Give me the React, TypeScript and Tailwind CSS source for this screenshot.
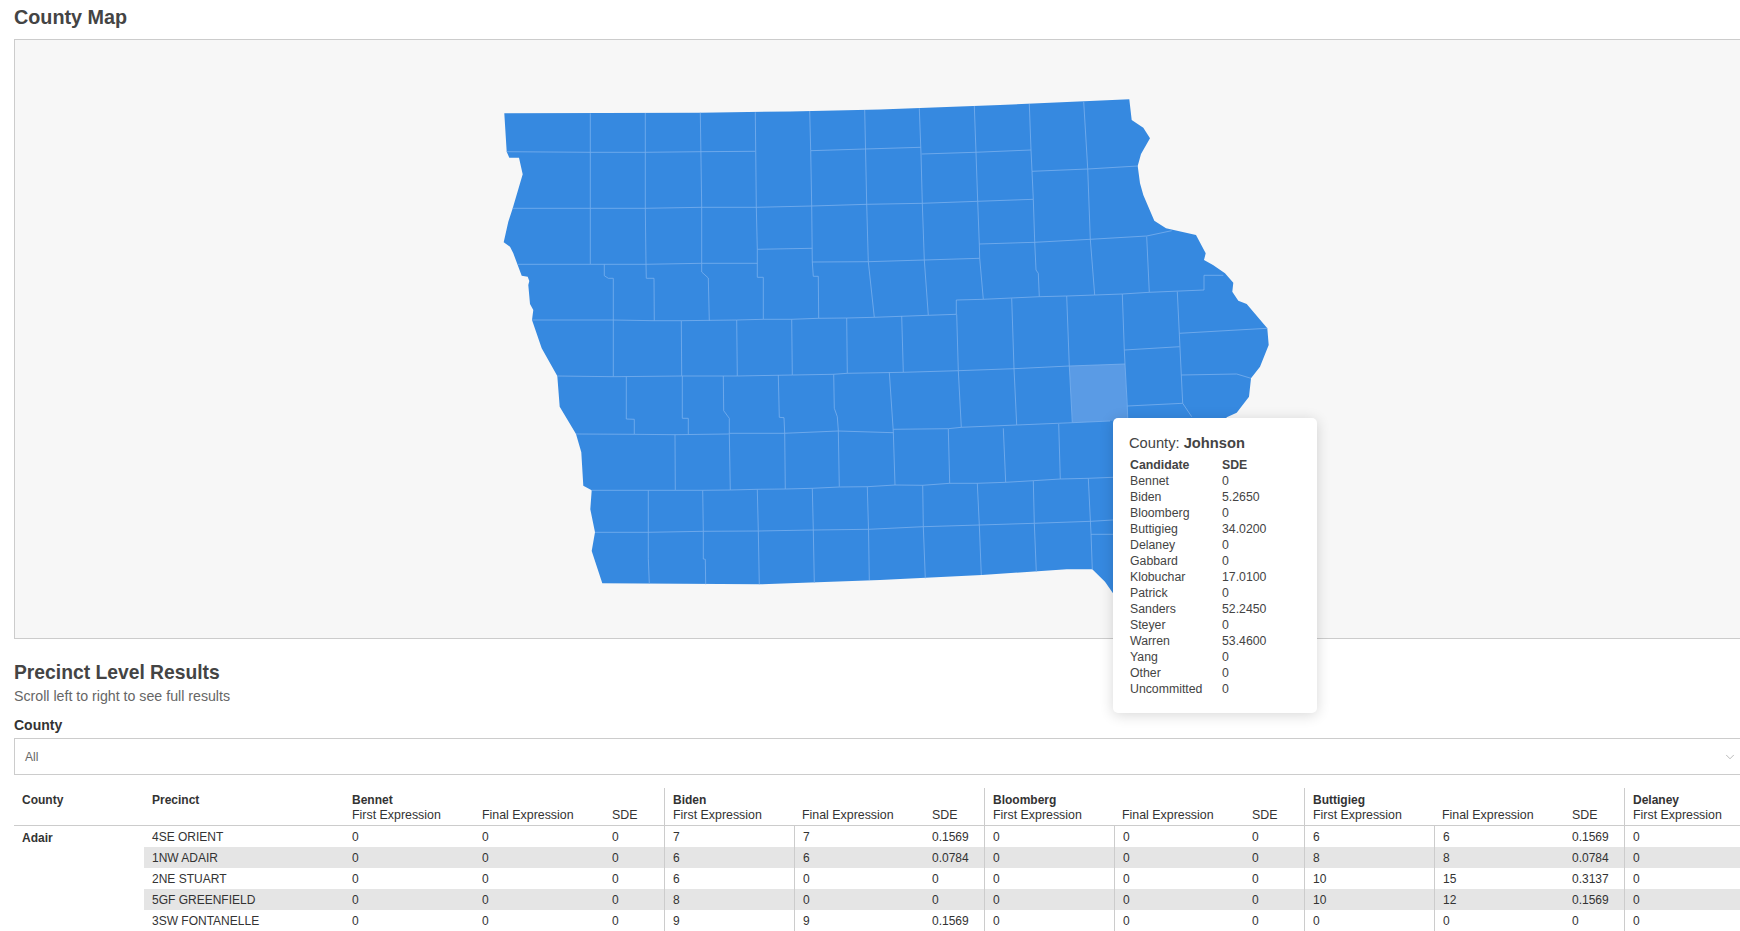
import { ChevronDown } from "lucide-react";

const outline =
  "M504.3 113.3 L700 112.7 L790 111.5 L880 109.5 L1000 105 L1129.3 99.3 L1131.7 120 L1143.3 127.7 L1150 138.3 L1141 154 L1137.7 166 L1140 183.3 L1143.3 195 L1154.3 220.7 L1166 228.3 L1196 235 L1205.7 253.3 L1204 260 L1213 265 L1225 273.3 L1233.3 282.7 L1232.3 291.7 L1238.3 300.7 L1246.7 304 L1267.3 328.3 L1268.7 345 L1260 366.7 L1251 378.3 L1249 396.7 L1236.7 412.7 L1226.7 417.3 L1200 480 L1150 560 L1113 593.3 L1105 581.7 L1092.3 569.3 L1066.7 569.3 L981.7 575 L880 580 L760 584.3 L602.3 583.3 L591.7 551 L595 532.3 L590.3 509.3 L591.7 490.3 L583.3 485.7 L581.3 452.3 L576 434 L559.7 406.7 L557.3 376 L541.7 348.3 L532 320 L533.3 310 L530 304 L528.3 285 L529.3 281 L527.7 276.7 L521.7 275.7 L513.3 253.3 L510 246.7 L503.7 242.3 L508.3 221.7 L512.7 208.3 L522.7 174.3 L519 157.7 L509.3 157.7 L506.7 151.7 Z";

// county borders, in page coordinates
const countyLines = [
  // vertical, north to south
  "590.3,113.3 590.3,264.3",
  "645.3,113 645.3,208 646,264.3 646.3,278.3 654,278.3 654.3,320.7",
  "700.3,112.7 701.7,207 701.7,263.3 701.7,272 708.3,278 709.3,320.7",
  "755.3,112.3 756.3,207 757.3,249.3 757.3,277.3 763.3,277.3 763.3,319.3",
  "809.7,111 810.7,150.7 811.7,206 812.3,262 813.3,276.3 818.3,276.3 818.7,318.3",
  "864.7,110 866.7,204 868.3,261.7 874.3,317.3",
  "919.3,108.3 921,154 922.3,203.3 924.3,260 928.3,315.3",
  "974.3,106 976,152.7 977.7,201.3 979.3,244 979.7,258.3 983.3,299.3",
  "1029.3,104 1031,150 1032,171.3 1033.3,199.3 1034.7,241.7 1036,270 1038.3,273.3 1039.3,296.7",
  "1083.7,101.7 1087.7,168.3 1090.3,239.3 1094.7,295",
  "1146.7,236.7 1149.3,292.3",
  "604.3,264.3 604.3,275.7 608.3,278.3 613.3,278.3 613.3,376.7",
  "681.3,320.7 681.7,376",
  "736.7,320 737.3,376",
  "791.7,319.3 792.3,375",
  "846.7,318 847.3,373.3",
  "901.7,316 903.3,372.3",
  "956.3,314.3 956.3,300",
  "956.7,314.3 958.3,370.7 961.3,427.3",
  "1011.7,298.3 1014,368.7 1016.7,425",
  "1066.7,296 1069.3,366 1072.3,422.7",
  "1122.3,294 1124.3,350 1125,364 1127.3,406 1127.7,418",
  "1177.3,291.7 1179.3,333.3 1181.3,375 1182.7,403.3 1191.7,416.7",
  "626.3,376.7 626.3,419 634.3,419.3 634.3,434.3",
  "682.3,376 682.3,418.3 688.3,418.3 688.3,434.3",
  "723.3,376 723.7,410.7 729.3,418.3 729.3,433.3 730.3,490",
  "778.3,375 779.3,417.3 784,417.7 784.7,433.3 785.3,489",
  "833.7,374.3 834.3,408.3 837.3,416.7 838.3,430 839.3,486.7",
  "889.3,372.3 893.3,431.7 895,485",
  "948.3,429 949.7,483.3",
  "1003.3,428.3 1005.7,482.3",
  "1058.7,424 1060.3,479",
  "675,434.7 675.3,490.3",
  "648.3,490.3 648.3,558.3 649.3,583.3",
  "702.7,490.3 703.3,531.3 703.3,559 705.3,559.3 705.7,584.3",
  "757.3,489.3 758.3,530.7 759.3,584.3",
  "812.3,488.3 813.3,530 814.3,582.7",
  "867.3,486.7 868.5,529.3 869.3,580",
  "922.7,485.3 923.3,526.7 925.3,578.3",
  "977.3,483.3 979.3,525 981.3,575",
  "1033.3,480.7 1034.3,523.3 1036.3,571.7",
  "1088.3,478.3 1091,533.3 1092.3,569.3",
  // horizontal, west to east
  "506.7,151.7 590.3,152.3 645.3,152.3 700,151.7 755.3,151.3",
  "810.7,150.7 864.7,149 920.7,147.3",
  "921.7,154 975,152.3 1031,150",
  "1032,171.3 1087.7,169 1137.7,166",
  "512.7,208.3 590.3,208.3 645.3,208.3 701.7,207.3 756.3,207.3 811.7,206 867.3,204.3 922.3,203.3 977.7,201.3 1033.3,199.3",
  "757.3,249.3 812.3,248.3",
  "517.7,264.3 590.3,264.3 646,264.3 701.7,263.3 757.3,263.3",
  "812.3,262 868.3,261.7 924.3,260 979.7,258.3",
  "979.3,244 1034.7,242.3 1090.3,239.3 1146.7,236 1171.7,230.7",
  "532,320 613.3,320 654,320.7 681.3,320.7 736.7,320 763.3,319.3 791.7,319.3 818.3,318.3 846.7,318 874.3,317.3 928.3,315.3 956.3,314.3",
  "956.3,300 983.3,299.3 1039.3,296.7 1066.7,296 1094.7,295 1122.3,294 1149.3,292.3 1204,290 1204,275.3 1223.3,275.3",
  "1179.3,333.3 1267.3,328.3",
  "1181.3,375 1236.7,374 1251,378.3",
  "1124.3,350 1179.7,346.7",
  "1127.3,406 1182.7,403.3",
  "557.3,376 613.3,376.7 681.7,376 737.3,376 792.3,375 833.3,374.3 847.3,373.3 903.3,372.3 958.3,370.7 1014,368.7 1069.3,366 1125,364",
  "576,434 634.3,434.3 675,434.7 728.3,434 729.3,433.3 784,433.3 838.3,431 893.3,432.7",
  "893.3,429.3 948.3,428.7 961.3,427.3 1016.7,425 1072.3,422.7 1110,421",
  "591.7,490.3 675.3,490.3 702.7,490.3 730.3,490 757.3,489.3 785.3,489 812.3,488.3 839.3,487 867.3,486.7 895,485 922.7,485.3 949.7,483.3 977.3,483.3 1005.7,482.3 1033.3,480.7 1060.3,479 1088.3,478.3 1113,477.3",
  "595,532.3 648.3,532.3 703.3,531.3 758.3,531 813.3,530 868.7,529.3 923.3,526.7 979.3,525 1034.3,523.3 1091,521.3 1113,520",
  "1091,534.3 1113,534.3",
];

const sdeTotals = [
  ["Bennet", "0"],
  ["Biden", "5.2650"],
  ["Bloomberg", "0"],
  ["Buttigieg", "34.0200"],
  ["Delaney", "0"],
  ["Gabbard", "0"],
  ["Klobuchar", "17.0100"],
  ["Patrick", "0"],
  ["Sanders", "52.2450"],
  ["Steyer", "0"],
  ["Warren", "53.4600"],
  ["Yang", "0"],
  ["Other", "0"],
  ["Uncommitted", "0"],
];

const groups = ["Bennet", "Biden", "Bloomberg", "Buttigieg"];

const precincts: { name: string; values: string[]; striped: boolean }[] = [
  { name: "4SE ORIENT", striped: false, values: ["0", "0", "0", "7", "7", "0.1569", "0", "0", "0", "6", "6", "0.1569", "0"] },
  { name: "1NW ADAIR", striped: true, values: ["0", "0", "0", "6", "6", "0.0784", "0", "0", "0", "8", "8", "0.0784", "0"] },
  { name: "2NE STUART", striped: false, values: ["0", "0", "0", "6", "0", "0", "0", "0", "0", "10", "15", "0.3137", "0"] },
  { name: "5GF GREENFIELD", striped: true, values: ["0", "0", "0", "8", "0", "0", "0", "0", "0", "10", "12", "0.1569", "0"] },
  { name: "3SW FONTANELLE", striped: false, values: ["0", "0", "0", "9", "9", "0.1569", "0", "0", "0", "0", "0", "0", "0"] },
];

const columnWidths = ["w-[130px]", "w-[200px]", "w-[130px]", "w-[130px]", "w-[60px]", "w-[130px]", "w-[130px]", "w-[60px]", "w-[130px]", "w-[130px]", "w-[60px]", "w-[130px]", "w-[130px]", "w-[60px]", "w-[130px]"];

const headCell = "border-b border-[#ccc] pl-2 pt-[5px] pb-[2px] text-left";

function CountyMap() {
  return (
    <svg viewBox="15 40 1730 598" className="block h-[598px] w-[1730px]">
      <path d={outline} fill="#3689e0" />
      <polygon points="1069.3,366 1125,364 1127.7,420 1072.5,422.7" fill="#5a9be5" />
      {countyLines.map((points) => (
        <polyline key={points} points={points} fill="none" stroke="#7ab0ee" strokeWidth="0.8" />
      ))}
    </svg>
  );
}

function CountyTooltip() {
  return (
    <div className="absolute left-[1113px] top-[418px] h-[295px] w-[204px] rounded-[5px] bg-white pl-[17px] pt-[15px] text-[#444] shadow-[0_2px_14px_rgba(0,0,0,0.16)]">
      <div className="-ml-px text-[14.7px] leading-[20px]">
        County: <span className="font-bold">Johnson</span>
      </div>
      <div className="mt-[4px] grid grid-cols-[92px_1fr] text-[12.3px] leading-[16px]">
        <div className="font-bold">Candidate</div>
        <div className="font-bold">SDE</div>
        {sdeTotals.map(([name, sde]) => (
          <div key={name} className="contents">
            <div>{name}</div>
            <div>{sde}</div>
          </div>
        ))}
      </div>
    </div>
  );
}

function GroupHead({ name, first }: { name: string; first: boolean }) {
  return (
    <>
      <th className={`${headCell} align-top font-normal ${first ? "" : "border-l border-l-[#ccc]"}`}>
        <div className="text-[12px] font-bold">{name}</div>
        <div>First Expression</div>
      </th>
      <th className={`${headCell} align-bottom font-normal`}>Final Expression</th>
      <th className={`${headCell} align-bottom font-normal`}>SDE</th>
    </>
  );
}

function ResultsTable() {
  return (
    <table className="mt-[13px] w-[1870px] table-fixed border-separate border-spacing-0 text-[12.4px] leading-[15px] text-[#333]">
      <colgroup>
        {columnWidths.map((w, i) => (
          <col key={i} className={w} />
        ))}
      </colgroup>
      <thead>
        <tr>
          <th className={`${headCell} align-top text-[12px] font-bold`}>County</th>
          <th className={`${headCell} align-top text-[12px] font-bold`}>Precinct</th>
          {groups.map((group, i) => (
            <GroupHead key={group} name={group} first={i === 0} />
          ))}
          <th className={`${headCell} border-l border-l-[#ccc] align-top font-normal`}>
            <div className="text-[12px] font-bold">Delaney</div>
            <div>First Expression</div>
          </th>
          <th className={headCell} />
          <th className={headCell} />
        </tr>
      </thead>
      <tbody className="text-[12px]">
        {precincts.map((row, r) => (
          <tr key={row.name} className="h-[21px]">
            {r === 0 && (
              <td rowSpan={5} className="pl-2 pt-[5px] align-top font-bold">
                Adair
              </td>
            )}
            <td className={`pl-2 pt-[2px] ${row.striped ? "bg-[#e5e5e5]" : ""}`}>{row.name}</td>
            {row.values.map((value, i) => {
              const groupStart = i % 3 === 0 && i > 0;
              const midRule = i % 3 === 1 && i > 1;
              return (
                <td
                  key={i}
                  className={`pl-2 pt-[2px] ${row.striped ? "bg-[#e5e5e5]" : ""} ${groupStart || midRule ? "border-l border-[#ccc]" : ""}`}
                >
                  {value}
                </td>
              );
            })}
            <td className={row.striped ? "bg-[#e5e5e5]" : ""} />
            <td className={row.striped ? "bg-[#e5e5e5]" : ""} />
          </tr>
        ))}
      </tbody>
    </table>
  );
}

export default function App() {
  return (
    <div className="relative h-[931px] w-[1740px] overflow-hidden bg-white font-['Liberation_Sans',Arial,sans-serif] text-[#444] antialiased">
      <div className="w-[1760px] pl-[14px]">
        <h1 className="h-[39px] text-[19.8px] font-bold leading-[34px]">County Map</h1>
        <div className="h-[600px] w-[1732px] border border-[#ccc] bg-[#f7f7f7]">
          <CountyMap />
        </div>

        <h2 className="mt-[22px] text-[19.3px] font-bold leading-[24px]">Precinct Level Results</h2>
        <p className="mt-[1px] text-[14.2px] leading-[20px] text-[#666]">Scroll left to right to see full results</p>
        <label className="mt-[9px] block text-[14px] font-bold leading-[20px] text-[#333]">County</label>
        <div className="mt-[3px] flex h-[37px] w-[1732px] items-center justify-between border border-[#ccc] pl-[10px] pr-[8px] text-[12px] text-[#666]">
          <span>All</span>
          <ChevronDown size={14} strokeWidth={1} className="text-[#888]" />
        </div>
        <ResultsTable />
      </div>
      <CountyTooltip />
    </div>
  );
}
